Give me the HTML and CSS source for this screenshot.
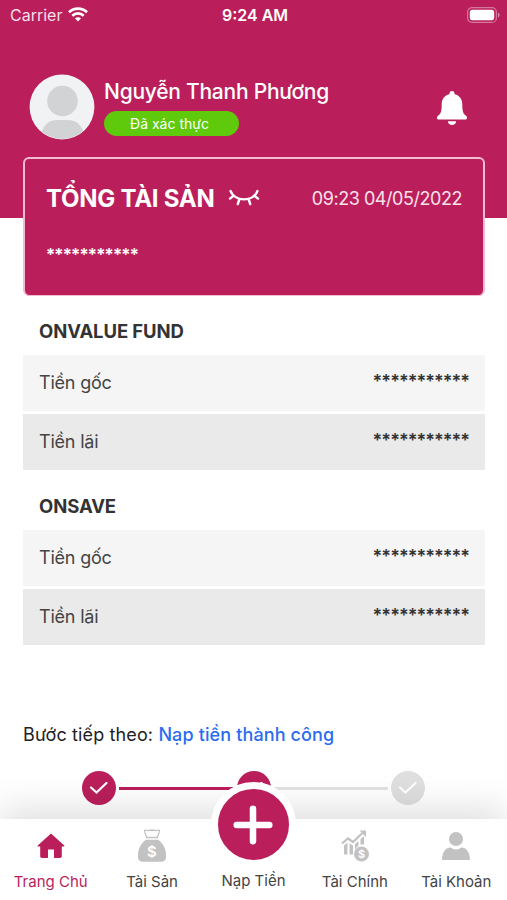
FILE: index.html
```html
<!DOCTYPE html>
<html lang="vi">
<head>
    <meta charset="UTF-8">
    <title>Trang Chủ</title>
    <link rel="stylesheet" href="styles.css">
</head>
<body>
    <div class="screen">
        <header class="header">
            <div class="status-bar">
                <div class="carrier">
                    <span>Carrier</span>
                    <svg width="20" height="15" viewBox="0 0 20 15" fill="none" stroke="#fff" stroke-width="2.7">
                        <path d="M1 5.2C6 .5 14 .5 19 5.2"/>
                        <path d="M4.3 8.7C7.6 5.7 12.4 5.7 15.7 8.7"/>
                        <path d="M10 14.4L6.9 11.3C8.6 9.8 11.4 9.8 13.1 11.3Z" fill="#fff" stroke="none"/>
                    </svg>
                </div>
                <span class="clock">9:24 AM</span>
                <svg class="battery" width="33" height="16" viewBox="0 0 33 16">
                    <rect x=".6" y=".6" width="28.8" height="14.8" rx="4.5" fill="none" stroke="#fff" stroke-opacity=".4" stroke-width="1.2"/>
                    <rect x="2.8" y="2.8" width="24.4" height="10.4" rx="2.6" fill="#fff"/>
                    <path d="M31 5.5C33 6.5 33 9.5 31 10.5Z" fill="#fff" fill-opacity=".5"/>
                </svg>
            </div>

            <div class="profile">
                <svg class="avatar" width="66" height="66" viewBox="0 0 66 66">
                    <clipPath id="avatarClip"><circle cx="33" cy="33" r="32"/></clipPath>
                    <circle cx="33" cy="33" r="32.4" fill="#f1f2f4"/>
                    <g fill="#d1d3d4" clip-path="url(#avatarClip)">
                        <circle cx="33.5" cy="27" r="15.3"/>
                        <path d="M12 60C15 50 20 46 29 46H38C47 46 52 50 55 60V66H12Z"/>
                    </g>
                </svg>
                <div class="profile-info">
                    <div class="profile-name">Nguyễn Thanh Phương</div>
                    <div class="badge">Đã xác thực</div>
                </div>
                <svg class="bell" width="32" height="35" viewBox="0 0 32 35" fill="#fff">
                    <path d="M16 0C17.7 0 18.6 1.2 18.6 3.3C23.7 4.5 26.3 8.3 26.3 13.5C26.3 20.5 27.1 22.6 30.2 24.9C31.7 26.2 31.2 28.5 29.2 28.5H2.8C.8 28.5.3 26.2 1.8 24.9C4.9 22.6 5.7 20.5 5.7 13.5C5.7 8.3 8.3 4.5 13.4 3.3C13.4 1.2 14.3 0 16 0Z"/>
                    <path d="M11.8 30.3H20.2C19.8 32.8 18.3 34 16 34S12.2 32.8 11.8 30.3Z"/>
                </svg>
            </div>
        </header>

        <main class="content">
            <section class="total-card">
                <div class="total-top">
                    <h1>TỔNG TÀI SẢN</h1>
                    <svg class="eye" width="32" height="18" viewBox="0 0 32 18" fill="none" stroke="#fff" stroke-width="2.4" stroke-linecap="round">
                        <path d="M2.5 2C7 13.2 25 13.2 29.5 2"/>
                        <path d="M5.2 7L2 9.6M11.3 10.5L9.8 15M20.7 10.5L22.2 15M26.8 7L30 9.6"/>
                    </svg>
                    <span class="total-date">09:23 04/05/2022</span>
                </div>
                <div class="total-value">***********</div>
            </section>

            <section class="fund">
                <h2>ONVALUE FUND</h2>
                <div class="fund-row">
                    <span>Tiền gốc</span>
                    <span class="masked">***********</span>
                </div>
                <div class="fund-row fund-row-dark">
                    <span>Tiền lãi</span>
                    <span class="masked">***********</span>
                </div>
            </section>

            <section class="fund">
                <h2>ONSAVE</h2>
                <div class="fund-row">
                    <span>Tiền gốc</span>
                    <span class="masked">***********</span>
                </div>
                <div class="fund-row fund-row-dark">
                    <span>Tiền lãi</span>
                    <span class="masked">***********</span>
                </div>
            </section>

            <section class="next-step">
                <div class="next-label">Bước tiếp theo: <a class="next-link">Nạp tiền thành công</a></div>
                <div class="steps">
                    <div class="step done">
                        <svg width="20" height="14" viewBox="0 0 20 14"><path d="M2 6.5L7.5 11.5L17.5 2"/></svg>
                    </div>
                    <div class="line done"></div>
                    <div class="step done">
                        <svg width="20" height="14" viewBox="0 0 20 14"><path d="M2 6.5L7.5 11.5L17.5 2"/></svg>
                    </div>
                    <div class="line"></div>
                    <div class="step">
                        <svg width="20" height="14" viewBox="0 0 20 14"><path d="M2 6.5L7.5 11.5L17.5 2"/></svg>
                    </div>
                </div>
            </section>
        </main>

        <nav class="tabbar">
            <a class="tab active">
                <svg width="32" height="34" viewBox="0 0 32 34" fill="#ba1f5b">
                    <path d="M16 4.5L29 16.2C29.8 17 29.4 17.6 28.5 17.6H26.8V27.3C26.8 28.6 26.3 29 25 29H19V20.5H13V29H7C5.7 29 5.2 28.6 5.2 27.3V17.6H3.5C2.6 17.6 2.2 17 3 16.2Z"/>
                </svg>
                <span>Trang Chủ</span>
            </a>
            <a class="tab">
                <svg width="32" height="34" viewBox="0 0 32 34" fill="#c2c2c2">
                    <path d="M10.7 8.5L8.6 2.6C8.2 1.3 8.7.9 9.8 1.2L12 1.7L16 1L20 1.7L22.2 1.2C23.3.9 23.8 1.3 23.4 2.6L21.3 8.5Z" fill="none" stroke="#c2c2c2" stroke-width="1.3"/>
                    <path d="M10 10.8H22C27 14 30.1 20 30.1 26.7C30.1 31 28.5 32.7 24.5 32.7H7.5C3.5 32.7 1.9 31 1.9 26.7C1.9 20 5 14 10 10.8Z"/>
                    <text x="16" y="27.5" class="dollar-bag">$</text>
                </svg>
                <span>Tài Sản</span>
            </a>
            <a class="tab tab-deposit">
                <span class="plus">
                    <svg width="40" height="40" viewBox="0 0 40 40"><path d="M20 3.7V36.3M3.7 20H36.3"/></svg>
                </span>
                <span>Nạp Tiền</span>
            </a>
            <a class="tab">
                <svg width="32" height="34" viewBox="0 0 32 34" fill="#c2c2c2">
                    <path d="M3 14.5L9 9.5L14 13L24 3.5" fill="none" stroke="#c2c2c2" stroke-width="2.2"/>
                    <path d="M20.5 1.5H27V8Z"/>
                    <path d="M5 16.5L8.5 13.5V25.5H5ZM10.5 14.5L14 16.5V25.5H10.5ZM16 15L19.5 12V17C17.8 18 16.5 19.5 16 21ZM21.5 10L25 7V15.5H21.5Z"/>
                    <circle cx="22.5" cy="25" r="7.5"/>
                    <text x="22.5" y="29" class="dollar-coin">$</text>
                </svg>
                <span>Tài Chính</span>
            </a>
            <a class="tab">
                <svg width="32" height="34" viewBox="0 0 32 34" fill="#c2c2c2">
                    <circle cx="16" cy="10" r="7"/>
                    <path d="M2 31C2 23 6 18.5 10.5 18.5C14 21 18 21 21.5 18.5C26 18.5 30 23 30 31Z"/>
                </svg>
                <span>Tài Khoản</span>
            </a>
        </nav>
    </div>
</body>
</html>
```
FILE: styles.css
```css
* {
    box-sizing: border-box;
}
body {
    margin: 0;
    font-family: Inter, "Noto Sans", sans-serif;
    background-color: #fff;
    color: #333;
}
svg {
    display: block;
    flex: none;
}
.screen {
    display: flex;
    flex-direction: column;
    width: 507px;
    height: 900px;
    overflow: hidden;
}
.header {
    flex: none;
    height: 218px;
    background-color: #ba1f5b;
    color: #fff;
}
.status-bar {
    display: grid;
    grid-template-columns: 1fr auto 1fr;
    align-items: center;
    height: 29px;
    padding: 0 7px 0 10px;
    font-size: 16px;
}
.carrier {
    display: flex;
    align-items: center;
    gap: 6px;
    color: #f7dfe8;
}
.clock {
    font-weight: 600;
    font-size: 16px;
}
.battery {
    justify-self: end;
}
.profile {
    display: flex;
    align-items: flex-start;
    padding: 45px 39px 0 29px;
}
.profile-info {
    flex: 1;
    padding: 4px 0 0 9px;
}
.profile-name {
    font-size: 21px;
    line-height: 27px;
    font-weight: 500;
    letter-spacing: -0.25px;
    white-space: nowrap;
}
.badge {
    width: 135px;
    height: 25px;
    margin-top: 6px;
    padding-right: 4px;
    border-radius: 13px;
    background-color: #5fc90b;
    font-size: 14px;
    line-height: 25px;
    text-align: center;
}
.bell {
    margin-top: 17px;
}
.content {
    flex: 1;
    padding: 0 22px 0 23px;
}
.total-card {
    height: 139px;
    margin-top: -61px;
    padding: 23px 21px 0;
    border: 2px solid #f3bcd1;
    border-bottom-width: 1px;
    border-radius: 6px;
    background-color: #ba1f5b;
    color: #fff;
}
.total-top {
    display: flex;
    align-items: center;
    height: 32px;
}
.total-top h1 {
    margin: 0;
    font-size: 24px;
    font-weight: 700;
    letter-spacing: -0.25px;
    white-space: nowrap;
}
.eye {
    margin-left: 13px;
}
.total-date {
    margin-left: auto;
    font-size: 18px;
    letter-spacing: -0.45px;
    color: #fbe3ec;
    white-space: nowrap;
}
.total-value {
    margin-top: 29px;
    font-size: 17px;
    line-height: 24px;
    font-weight: 600;
    letter-spacing: -0.8px;
}
.fund h2 {
    margin: 0;
    padding: 22px 16px 11px;
    font-size: 18.5px;
    line-height: 26px;
    font-weight: 700;
    letter-spacing: -0.1px;
}
.fund + .fund h2 {
    padding-top: 23px;
}
.fund-row {
    display: flex;
    align-items: center;
    justify-content: space-between;
    height: 56px;
    padding: 0 16px 1px;
    background-color: #f5f5f5;
    color: #444;
    font-size: 18px;
    letter-spacing: -0.2px;
}
.fund-row-dark {
    margin-top: 3px;
    background-color: #eaeaea;
}
.masked {
    padding-bottom: 3px;
    color: #333;
    font-weight: 600;
    letter-spacing: -0.95px;
}
.next-step {
    padding-top: 77px;
}
.next-label {
    font-size: 18px;
    line-height: 26px;
    letter-spacing: 0.13px;
    color: #222;
    white-space: nowrap;
}
.next-link {
    color: #2a6cf0;
    font-weight: 500;
}
.steps {
    display: flex;
    align-items: center;
    justify-content: space-between;
    margin-top: 23px;
    padding: 0 60px 0 59px;
}
.step {
    display: flex;
    align-items: center;
    justify-content: center;
    width: 34px;
    height: 34px;
    border-radius: 50%;
    background-color: #dfdfdf;
}
.step.done {
    background-color: #ba1f5b;
}
.step path {
    fill: none;
    stroke: #fff;
    stroke-width: 2.2;
    stroke-linecap: round;
}
.line {
    width: 114px;
    height: 3px;
    background-color: #e2e2e2;
}
.line.done {
    background-color: #ba1f5b;
}
.tabbar {
    position: relative;
    display: grid;
    grid-template-columns: repeat(5, 1fr);
    flex: none;
    height: 81px;
    background-color: #fff;
    box-shadow: 0 -10px 36px rgba(0, 0, 0, 0.13);
}
.tab {
    display: flex;
    flex-direction: column;
    align-items: center;
    padding-top: 10px;
    font-size: 15px;
    line-height: 20px;
    color: #444;
    white-space: nowrap;
}
.tab > span:last-child {
    margin-top: 9px;
}
.tab.active {
    color: #ba1f5b;
}
.tab-deposit {
    padding-top: 0;
}
.plus {
    display: flex;
    align-items: center;
    justify-content: center;
    flex: none;
    width: 85px;
    height: 85px;
    margin-top: -37px;
    border: 7px solid #fff;
    border-radius: 50%;
    background-color: #ba1f5b;
}
.tab-deposit > span:last-child {
    margin-top: 4px;
}
.plus path {
    stroke: #fff;
    stroke-width: 6.5;
    stroke-linecap: round;
}
.dollar-bag,
.dollar-coin {
    fill: #fff;
    font-size: 15px;
    font-weight: 600;
    text-anchor: middle;
}
.dollar-coin {
    font-size: 11px;
}
```
